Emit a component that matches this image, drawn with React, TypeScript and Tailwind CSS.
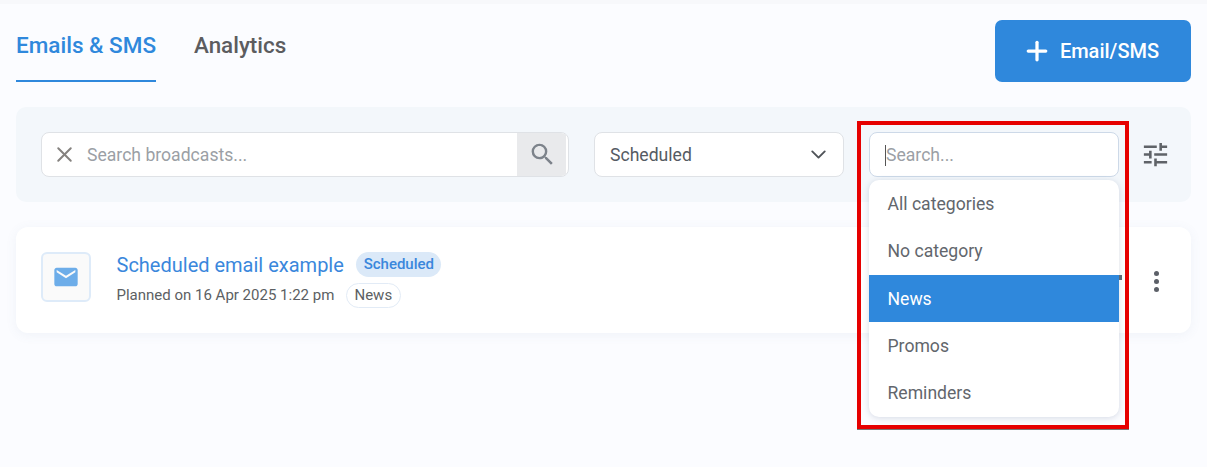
import { Plus, ChevronDown, X } from 'lucide-react'

const categories = ['All categories', 'No category', 'News', 'Promos', 'Reminders']

function FiltersIcon() {
  return (
    <svg width="31" height="31" viewBox="0 0 24 24" fill="#5f6368">
      <path d="M3 17v2h6v-2H3zM3 5v2h10V5H3zm10 16v-2h8v-2h-8v-2h-2v6h2zM7 9v2H3v2h4v2h2V9H7zm14 4v-2H11v2h10zm-6-4h2V7h4V5h-4V3h-2v6z" />
    </svg>
  )
}

function SearchIcon() {
  return (
    <svg width="29" height="29" viewBox="0 0 24 24" fill="#7d838b">
      <path d="M15.5 14h-.79l-.28-.27A6.47 6.47 0 0 0 16 9.5 6.5 6.5 0 1 0 9.5 16c1.61 0 3.09-.59 4.23-1.57l.27.28v.79l5 4.99L20.49 19l-4.99-5zm-6 0C7.01 14 5 11.99 5 9.5S7.01 5 9.5 5 14 7.01 14 9.5 11.99 14 9.5 14z" />
    </svg>
  )
}

function MailIcon() {
  return (
    <svg width="28" height="28" viewBox="0 0 24 24" fill="#6dade9">
      <path d="M20 4H4c-1.1 0-2 .9-2 2v12c0 1.1.9 2 2 2h16c1.1 0 2-.9 2-2V6c0-1.1-.9-2-2-2zm0 4l-8 5-8-5V6l8 5 8-5v2z" />
    </svg>
  )
}

function CategoryFilter() {
  return (
    <div className="relative h-[45px] w-[250px]">
      <div className="flex h-full items-center rounded-[8px] border border-[#cdd9e8] bg-white pl-[15px] pt-[2px] text-[17.6px] text-[#9b9fa5]">
        <span className="h-[21px] w-px bg-[#555]" />
        Search...
      </div>
      <div className="absolute left-0 top-[48px] z-10 w-[250px] overflow-hidden rounded-[10px] bg-white shadow-[0_1px_6px_rgba(60,80,120,0.2)]">
        {categories.map((c) => (
          <div
            key={c}
            className={`flex h-[47.4px] items-center pl-[18.5px] pt-[0.5px] text-[17.6px] ${
              c === 'News' ? 'bg-[#2f88dc] text-white' : 'text-[#62666c]'
            }`}
          >
            {c}
          </div>
        ))}
      </div>
      <div className="absolute left-[250px] top-[143px] z-10 h-[5px] w-[3px] bg-[#5c6a78]" />
      {/* red annotation round the dropdown */}
      <div className="pointer-events-none absolute left-[-12px] top-[-11px] z-20 h-[308px] w-[272px] border-[4px] border-[#e60000] shadow-[0_1px_0_#777]" />
    </div>
  )
}

export default function App() {
  return (
    <div className="relative h-[467px] w-[1207px] overflow-hidden bg-[#fbfcff] px-[16px] font-['Roboto',sans-serif]">
      <div className="absolute inset-x-0 top-0 h-[4px] bg-[#f7f8fb]" />

      <div className="flex h-[107px] items-start justify-between">
        <div className="flex gap-[38px] pt-[20px]">
          <div className="h-[62px] w-[140px] border-b-2 border-[#2f88dc] pt-[10px] text-[22.5px] font-medium leading-[30px] whitespace-nowrap text-[#2f88dc]">
            Emails &amp; SMS
          </div>
          <div className="pt-[10px] text-[22.4px] font-medium leading-[30px] text-[#5c5c5f]">Analytics</div>
        </div>
        <button
          type="button"
          className="mt-[20px] flex h-[62px] w-[196px] items-center justify-center gap-[8px] rounded-[7px] bg-[#2f88dc] pr-[5px] text-[20px] font-medium text-white"
        >
          <Plus size={30} strokeWidth={2.6} />
          Email/SMS
        </button>
      </div>

      <div className="flex h-[95px] items-center rounded-[10px] bg-[#f3f7fb] pl-[25px]">
        <div className="flex h-[45px] w-[528px] items-center overflow-hidden rounded-[8px] border border-[#dfe2e6] bg-white">
          <X size={25} strokeWidth={1.9} className="ml-[10px] text-[#85827f]" />
          <span className="ml-[10px] flex-1 pt-[2px] text-[17.6px] text-[#9b9fa5]">Search broadcasts...</span>
          <div className="mr-[2px] flex h-full w-[49px] items-center justify-center bg-[#e9eaec] pl-[2px]">
            <SearchIcon />
          </div>
        </div>
        <div className="ml-[25px] flex h-[45px] w-[250px] items-center justify-between rounded-[8px] border border-[#dfe2e6] bg-white pl-[15px] pr-[12px] text-[17.6px] text-[#555b63]">
          <span className="pt-[2px]">Scheduled</span>
          <ChevronDown size={25} strokeWidth={1.8} className="text-[#4f5358]" />
        </div>
        <div className="ml-[25px]">
          <CategoryFilter />
        </div>
        <div className="ml-[21px]">
          <FiltersIcon />
        </div>
      </div>

      <div className="mt-[25px] flex h-[106px] items-start rounded-[12px] bg-white pl-[25px] pr-[32px] pt-[25px] shadow-[0_2px_12px_rgba(90,110,160,0.07)]">
        <div className="flex h-[50px] w-[50px] items-center justify-center rounded-[6px] border-2 border-[#deebf9] bg-[#fafafa]">
          <MailIcon />
        </div>
        <div className="ml-[25.5px] flex-1">
          <div className="flex items-start gap-[12.5px]">
            <span className="text-[20px] leading-[27px] text-[#3a87dc]">Scheduled email example</span>
            <span className="flex h-[25px] w-[85px] items-center justify-center rounded-full bg-[#dbe9f8] text-[15px] font-medium text-[#3a87dc]">
              Scheduled
            </span>
          </div>
          <div className="mt-[4px] flex items-center gap-[11.5px]">
            <span className="text-[15px] text-[#5c5f63]">Planned on 16 Apr 2025 1:22 pm</span>
            <span className="flex h-[25px] w-[55px] items-center justify-center rounded-full border border-[#e2ebf6] bg-white text-[15px] text-[#5c5f63]">
              News
            </span>
          </div>
        </div>
        <div className="mt-[19px] flex flex-col gap-[3px]">
          <span className="h-[5px] w-[5px] rounded-full bg-[#5c6068]" />
          <span className="h-[5px] w-[5px] rounded-full bg-[#5c6068]" />
          <span className="h-[5px] w-[5px] rounded-full bg-[#5c6068]" />
        </div>
      </div>
    </div>
  )
}
